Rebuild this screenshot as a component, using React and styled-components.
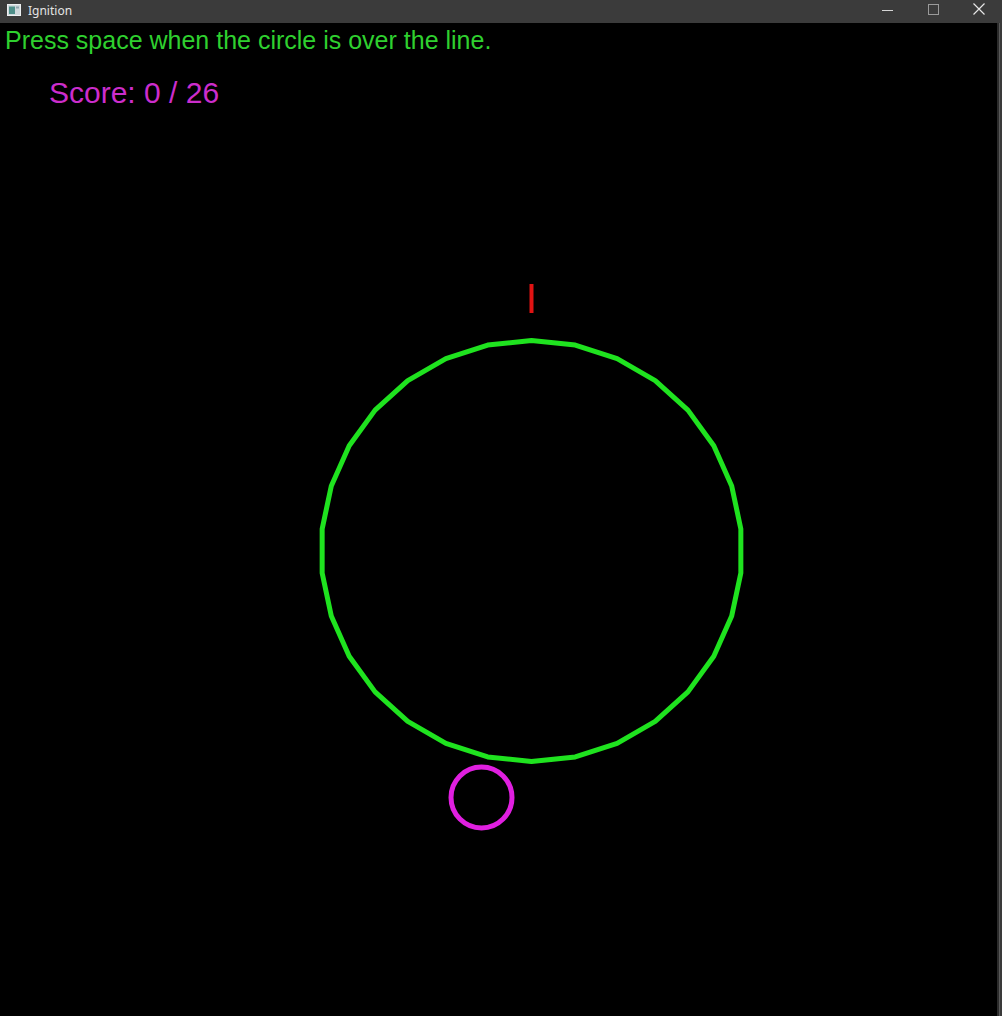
import React from "react";
import styled, { createGlobalStyle } from "styled-components";

const GlobalStyle = createGlobalStyle`
  html, body {
    margin: 0;
    padding: 0;
    background: #000;
  }
`;

const CENTER = { x: 531.5, y: 528 };
const RADIUS = 210.5;
const SIDES = 30;

// ring drawn as a polygon, same as the game does
const ringPoints = Array.from({ length: SIDES }, (_, i) => {
  const a = (Math.PI / 2) + (i * 2 * Math.PI) / SIDES;
  const x = CENTER.x + RADIUS * Math.cos(a);
  const y = CENTER.y - RADIUS * Math.sin(a);
  return `${x.toFixed(2)},${y.toFixed(2)}`;
}).join(" ");

export default function App() {
  return (
    <>
      <GlobalStyle />
      <Window>
        <TitleBar>
          <AppIcon viewBox="0 0 14 12">
            <rect x="0.5" y="0.5" width="13" height="11" fill="#cfd8dc" stroke="#eceff1" />
            <rect x="2" y="2.5" width="6" height="7.5" fill="#4f8f8a" />
            <rect x="9" y="2.5" width="3" height="2" fill="#90a4ae" />
          </AppIcon>
          <Title>Ignition</Title>
          <Controls>
            <CtrlButton>
              <svg width="11" height="11" viewBox="0 0 11 11">
                <line x1="0" y1="6.5" x2="11" y2="6.5" stroke="#d6d6d6" strokeWidth="1" />
              </svg>
            </CtrlButton>
            <CtrlButton>
              <svg width="11" height="11" viewBox="0 0 11 11">
                <rect x="0.5" y="0.5" width="10" height="10" fill="none" stroke="#9a9a9a" strokeWidth="1" />
              </svg>
            </CtrlButton>
            <CtrlButton>
              <svg width="12" height="12" viewBox="0 0 12 12">
                <path d="M0.5 0.5 L11.5 11.5 M11.5 0.5 L0.5 11.5" stroke="#e6e6e6" strokeWidth="1.2" />
              </svg>
            </CtrlButton>
          </Controls>
        </TitleBar>
        <Body>
          <Canvas>
            <Stage width="997" height="993" viewBox="0 0 997 993">
              <line x1="531.5" y1="261" x2="531.5" y2="290" stroke="#e01313" strokeWidth="4" />
              <polygon points={ringPoints} fill="none" stroke="#1fe31f" strokeWidth="5" strokeLinejoin="round" />
              <circle cx="481.5" cy="774.5" r="30.5" fill="none" stroke="#e01fe0" strokeWidth="5" />
            </Stage>
            <Prompt>Press space when the circle is over the line.</Prompt>
            <Score>Score: 0 / 26</Score>
          </Canvas>
          <Edge />
        </Body>
      </Window>
    </>
  );
}

const Window = styled.div`
  width: 1002px;
  height: 1016px;
  display: flex;
  flex-direction: column;
  background: #000;
  overflow: hidden;
`;

const TitleBar = styled.div`
  height: 23px;
  flex-shrink: 0;
  background: #3b3b3b;
  display: flex;
  align-items: center;
  padding-left: 7px;
`;

const AppIcon = styled.svg`
  width: 14px;
  height: 12px;
  margin-top: -3px;
`;

const Title = styled.span`
  margin-left: 7px;
  margin-top: -3px;
  font-family: "Noto Sans", "Open Sans", sans-serif;
  font-size: 12px;
  color: #e4e4e4;
`;

const Controls = styled.div`
  margin-left: auto;
  display: flex;
  height: 100%;
`;

const CtrlButton = styled.div`
  width: 46px;
  height: 100%;
  display: flex;
  align-items: center;
  justify-content: center;
  padding-bottom: 5px;
  box-sizing: border-box;
`;

const Body = styled.div`
  flex: 1;
  display: flex;
`;

const Canvas = styled.div`
  flex: 1;
  position: relative;
  background: #000;
  display: flex;
  flex-direction: column;
  align-items: flex-start;
`;

const Stage = styled.svg`
  position: absolute;
  left: 0;
  top: 0;
`;

const Prompt = styled.div`
  position: relative;
  margin: 3px 0 0 5px;
  font-family: "Liberation Sans", Arial, sans-serif;
  font-size: 25px;
  line-height: 28px;
  color: #2fd02f;
`;

const Score = styled.div`
  position: relative;
  margin: 23px 0 0 49px;
  font-family: "Liberation Sans", Arial, sans-serif;
  font-size: 30px;
  line-height: 32px;
  color: #cc2dcc;
`;

const Edge = styled.div`
  width: 3px;
  border-left: 2px solid #2c2c2c;
  background: linear-gradient(to right, #5a5a5a 0 1px, #3a3a3a 1px);
`;
